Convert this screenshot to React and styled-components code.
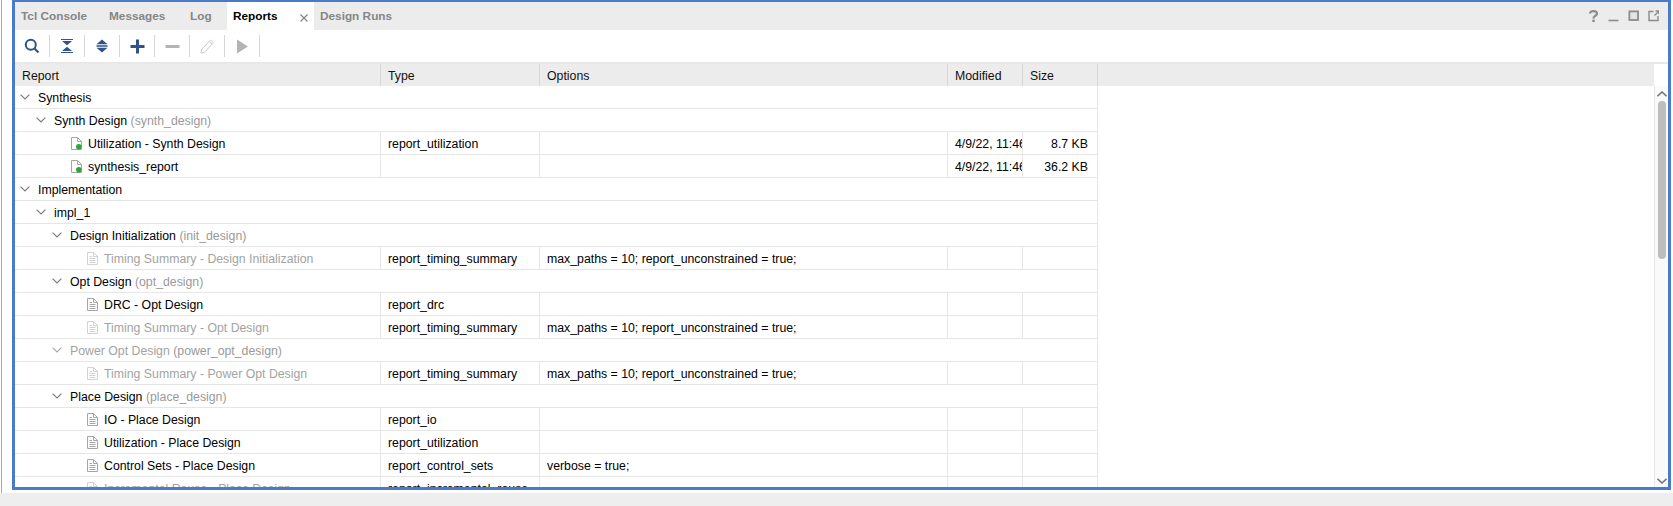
import styled, { createGlobalStyle } from "styled-components";

const GlobalStyle = createGlobalStyle`
  html, body {
    margin: 0;
    padding: 0;
    background: #eeeeee;
  }
  body {
    font-family: "Liberation Sans", Arial, sans-serif;
    font-size: 12.3px;
    color: #000;
  }
`;

const tabs = [
  { label: "Tcl Console", width: 88 },
  { label: "Messages", width: 81 },
  { label: "Log", width: 43 },
  { label: "Reports", width: 87, active: true },
  { label: "Design Runs", width: 93 },
];

const rows = [
  { depth: 0, name: "Synthesis" },
  { depth: 1, name: "Synth Design", note: "(synth_design)" },
  { depth: 2, leaf: true, done: true, name: "Utilization - Synth Design", type: "report_utilization", modified: "4/9/22, 11:46 AM", size: "8.7 KB" },
  { depth: 2, leaf: true, done: true, name: "synthesis_report", modified: "4/9/22, 11:46 AM", size: "36.2 KB" },
  { depth: 0, name: "Implementation" },
  { depth: 1, name: "impl_1" },
  { depth: 2, name: "Design Initialization", note: "(init_design)" },
  { depth: 3, leaf: true, off: true, name: "Timing Summary - Design Initialization", type: "report_timing_summary", options: "max_paths = 10; report_unconstrained = true;" },
  { depth: 2, name: "Opt Design", note: "(opt_design)" },
  { depth: 3, leaf: true, name: "DRC - Opt Design", type: "report_drc" },
  { depth: 3, leaf: true, off: true, name: "Timing Summary - Opt Design", type: "report_timing_summary", options: "max_paths = 10; report_unconstrained = true;" },
  { depth: 2, off: true, name: "Power Opt Design", note: "(power_opt_design)" },
  { depth: 3, leaf: true, off: true, name: "Timing Summary - Power Opt Design", type: "report_timing_summary", options: "max_paths = 10; report_unconstrained = true;" },
  { depth: 2, name: "Place Design", note: "(place_design)" },
  { depth: 3, leaf: true, name: "IO - Place Design", type: "report_io" },
  { depth: 3, leaf: true, name: "Utilization - Place Design", type: "report_utilization" },
  { depth: 3, leaf: true, name: "Control Sets - Place Design", type: "report_control_sets", options: "verbose = true;" },
  { depth: 3, leaf: true, off: true, name: "Incremental Reuse - Place Design", type: "report_incremental_reuse" },
];

const Page = styled.div`
  width: 1673px;
  height: 506px;
  overflow: hidden;
  background: #eeeeee;
`;

const Workspace = styled.div`
  height: 493px;
  padding: 0 2px 3px 12px;
  box-sizing: border-box;
  background: linear-gradient(to right, #fff 1px, #a9a9a9 1px, #a9a9a9 2px, #fff 2px);
`;

const Frame = styled.div`
  height: 490px;
  box-sizing: border-box;
  border: 3px solid #4a7bc8;
  border-top-width: 2px;
  background: #fff;
  display: flex;
  flex-direction: column;
  overflow: hidden;
`;

const TabBar = styled.div`
  height: 28px;
  flex: none;
  display: flex;
  align-items: stretch;
  background: #ececec;
`;

const Tab = styled.div`
  width: ${(p) => p.$width}px;
  box-sizing: border-box;
  display: flex;
  justify-content: space-between;
  padding: 0 6px;
  font-size: 11.8px;
  line-height: 29px;
  font-weight: bold;
  color: ${(p) => (p.$active ? "#000" : "#868686")};
  background: ${(p) => (p.$active ? "#fff" : "transparent")};
  box-shadow: ${(p) => (p.$active || p.$beforeActive ? "none" : "inset -1px -4px 0 0 #ececec, inset -1px 0 0 #c9c9c9")};
`;

const TabClose = styled.svg`
  width: 8px;
  height: 8px;
  align-self: center;
  margin-top: 3px;
`;

const WindowButtons = styled.div`
  margin-left: auto;
  display: flex;
  align-items: center;
  gap: 9px;
  padding-right: 9px;
`;

const Toolbar = styled.div`
  height: 32px;
  flex: none;
  display: flex;
  align-items: center;
  border-bottom: 2px solid #e8e8e8;
`;

const ToolButton = styled.div`
  width: 35px;
  height: 22px;
  box-sizing: border-box;
  border-right: 1px solid #d6d6d6;
  display: flex;
  align-items: center;
  justify-content: center;
`;

const Body = styled.div`
  flex: 1;
  min-height: 0;
  display: flex;
`;

const TablePane = styled.div`
  flex: 1;
  min-width: 0;
  overflow: hidden;
`;

const HeaderRow = styled.div`
  height: 22px;
  background: #ececec;
  display: flex;
`;

const Row = styled.div`
  width: 1083px;
  height: 23px;
  box-sizing: border-box;
  display: flex;
  border-bottom: 1px solid #e6e6e6;
  border-right: 1px solid #e6e6e6;
`;

const Cell = styled.div`
  width: ${(p) => p.$width}px;
  flex: none;
  box-sizing: border-box;
  padding: 1px 0 0 7px;
  line-height: 22px;
  white-space: nowrap;
  overflow: hidden;
  border-right: 1px solid ${(p) => (p.$head ? "#d9d9d9" : "#e6e6e6")};
  color: ${(p) => (p.$head ? "#111" : "#000")};
  &:last-child {
    border-right: ${(p) => (p.$head ? "1px solid #d9d9d9" : "none")};
  }
`;

const SizeCell = styled(Cell)`
  text-align: right;
  padding: 1px 10px 0 0;
`;

const GroupRow = styled(Row)`
  align-items: center;
  padding-left: ${(p) => 2 + p.$depth * 16}px;
`;

const TreeCell = styled(Cell)`
  display: flex;
  align-items: center;
  padding: 0 0 0 ${(p) => 24 + p.$depth * 16}px;
  color: ${(p) => (p.$off ? "#a3a3a3" : "#000")};
`;

const Chevron = styled.svg`
  width: 16px;
  height: 10px;
  flex: none;
`;

const TreeLabel = styled.span`
  padding-top: 2px;
  line-height: 22px;
`;

const GroupName = styled(TreeLabel)`
  margin-left: 5px;
  color: ${(p) => (p.$off ? "#a3a3a3" : "#000")};
`;

const Note = styled.span`
  color: #9a9a9a;
`;

const FileIcon = styled.svg`
  width: 11px;
  height: 13px;
  flex: none;
  margin-right: 6px;
`;

const ScrollColumn = styled.div`
  width: 14px;
  flex: none;
  display: flex;
  flex-direction: column;
  padding-top: 22px;
  box-sizing: border-box;
`;

const ScrollTrack = styled.div`
  flex: 1;
  display: flex;
  flex-direction: column;
  align-items: center;
  background: #fafafa;
  border-left: 1px solid #e6e6e6;
  box-sizing: border-box;
  padding: 5px 0 3px;
`;

const ScrollThumb = styled.div`
  width: 8px;
  height: 158px;
  margin-top: 4px;
  border-radius: 4px;
  background: #bdbdbd;
`;

const ScrollArrow = styled.svg`
  width: 10px;
  height: 6px;
  flex: none;
  margin-top: ${(p) => (p.$end ? "auto" : "0")};
`;

function TreeChevron({ off }) {
  return (
    <Chevron viewBox="0 0 16 10">
      <path d="M3.6 2.6 L8 7 L12.4 2.6" fill="none" stroke={off ? "#a8a8a8" : "#7d7d7d"} strokeWidth="1.2" />
    </Chevron>
  );
}

function ReportIcon({ done, off }) {
  const line = off ? "#d2d2d2" : "#a6a6a6";
  return (
    <FileIcon viewBox="0 0 11 13">
      <path d="M0.5 0.5 H6.5 L10.5 4.5 V12.5 H0.5 Z" fill="#fff" stroke={line} />
      <path d="M6.5 0.5 V4.5 H10.5" fill="none" stroke={line} />
      {!done && <path d="M2.5 4.5 H5 M2.5 6.5 H8.5 M2.5 8.5 H8.5 M2.5 10.5 H8.5" stroke={line} />}
      {done && <circle cx="7.8" cy="9.8" r="2.8" fill="#2fa63d" />}
    </FileIcon>
  );
}

function ToolIcon({ name }) {
  const navy = "#2f5487";
  const grey = "#b4b4b4";
  if (name === "search")
    return (
      <svg width="16" height="16" viewBox="0 0 16 16">
        <circle cx="6.8" cy="6.8" r="5" fill="none" stroke={navy} strokeWidth="2" />
        <path d="M10.5 10.5 L14.5 14.5" stroke={navy} strokeWidth="2.2" />
      </svg>
    );
  if (name === "collapse")
    return (
      <svg width="12" height="14" viewBox="0 0 12 14">
        <path d="M0 0 H12 V1 H0 Z M1 2 H11 L6 6.2 Z M6 7.8 L11 12 H1 Z M0 13 H12 V14 H0 Z" fill={navy} />
      </svg>
    );
  if (name === "expand")
    return (
      <svg width="14" height="14" viewBox="0 0 14 14">
        <path d="M7 0.5 L12.5 5.2 H1.5 Z M1.5 6.3 H12.5 V7.7 H1.5 Z M1.5 8.8 H12.5 L7 13.5 Z" fill={navy} />
      </svg>
    );
  if (name === "plus")
    return (
      <svg width="15" height="15" viewBox="0 0 15 15">
        <path d="M6 0.5 H9 V6 H14.5 V9 H9 V14.5 H6 V9 H0.5 V6 H6 Z" fill={navy} />
      </svg>
    );
  if (name === "minus")
    return (
      <svg width="15" height="15" viewBox="0 0 15 15">
        <path d="M0.5 6 H14.5 V9 H0.5 Z" fill={grey} />
      </svg>
    );
  if (name === "edit")
    return (
      <svg width="15" height="15" viewBox="0 0 15 15">
        <path d="M1.5 10.5 L10.5 1 L13.5 3.8 L4.5 13.2 L1 14 Z M9.2 2.4 L12.2 5.2" fill="none" stroke="#c9c9c9" />
      </svg>
    );
  return (
    <svg width="13" height="15" viewBox="0 0 13 15">
      <path d="M1 0.5 L12 7.5 L1 14.5 Z" fill={grey} />
    </svg>
  );
}

function WindowIcons() {
  return (
    <WindowButtons>
      <svg width="11" height="14" viewBox="0 0 11 14">
        <path d="M2 4.6 C2 1.2 9 1.2 9 4.6 C9 7 5.5 6.5 5.5 9.4" fill="none" stroke="#8c8c8c" strokeWidth="2.2" />
        <rect x="4.3" y="10.6" width="2.4" height="2.4" fill="#8c8c8c" />
      </svg>
      <svg width="11" height="14" viewBox="0 0 11 14">
        <path d="M0.5 11.5 H10.5" stroke="#8c8c8c" strokeWidth="1.6" />
      </svg>
      <svg width="11" height="14" viewBox="0 0 11 14">
        <rect x="1.4" y="2.4" width="8.6" height="8.6" fill="#e4e4e4" stroke="#8c8c8c" strokeWidth="1.8" />
      </svg>
      <svg width="11" height="14" viewBox="0 0 11 14">
        <path d="M5.5 2.5 H1 V11.5 H10 V7 M6.5 6.5 L10.5 2.5 M7.5 2 H10.8 V5.2" fill="none" stroke="#8c8c8c" strokeWidth="1.4" />
      </svg>
    </WindowButtons>
  );
}

export default function App() {
  return (
    <Page>
      <GlobalStyle />
      <Workspace>
        <Frame>
          <TabBar>
            {tabs.map((tab, i) => (
              <Tab key={tab.label} $width={tab.width} $active={tab.active} $beforeActive={tabs[i + 1] && tabs[i + 1].active}>
                {tab.label}
                {tab.active && (
                  <TabClose viewBox="0 0 8 8">
                    <path d="M0.5 0.5 L7.5 7.5 M7.5 0.5 L0.5 7.5" stroke="#808080" strokeWidth="1.1" />
                  </TabClose>
                )}
              </Tab>
            ))}
            <WindowIcons />
          </TabBar>
          <Toolbar>
            {["search", "collapse", "expand", "plus", "minus", "edit", "run"].map((name) => (
              <ToolButton key={name}>
                <ToolIcon name={name} />
              </ToolButton>
            ))}
          </Toolbar>
          <Body>
            <TablePane>
              <HeaderRow>
                <Cell $head $width={366}>Report</Cell>
                <Cell $head $width={159}>Type</Cell>
                <Cell $head $width={408}>Options</Cell>
                <Cell $head $width={75}>Modified</Cell>
                <Cell $head $width={75}>Size</Cell>
              </HeaderRow>
              {rows.map((row) =>
                row.leaf ? (
                  <Row key={row.name + row.depth}>
                    <TreeCell $width={366} $depth={row.depth} $off={row.off}>
                      <ReportIcon done={row.done} off={row.off} />
                      <TreeLabel>{row.name}</TreeLabel>
                    </TreeCell>
                    <Cell $width={159}>{row.type}</Cell>
                    <Cell $width={408}>{row.options}</Cell>
                    <Cell $width={75}>{row.modified}</Cell>
                    <SizeCell $width={75}>{row.size}</SizeCell>
                  </Row>
                ) : (
                  <GroupRow key={row.name} $depth={row.depth}>
                    <TreeChevron off={row.off} />
                    <GroupName $off={row.off}>
                      {row.name} {row.note && <Note>{row.note}</Note>}
                    </GroupName>
                  </GroupRow>
                )
              )}
            </TablePane>
            <ScrollColumn>
              <ScrollTrack>
                <ScrollArrow viewBox="0 0 10 6">
                  <path d="M0.5 5.2 L5 1 L9.5 5.2" fill="none" stroke="#777" strokeWidth="1.6" />
                </ScrollArrow>
                <ScrollThumb />
                <ScrollArrow $end viewBox="0 0 10 6">
                  <path d="M0.5 0.8 L5 5 L9.5 0.8" fill="none" stroke="#777" strokeWidth="1.6" />
                </ScrollArrow>
              </ScrollTrack>
            </ScrollColumn>
          </Body>
        </Frame>
      </Workspace>
    </Page>
  );
}
